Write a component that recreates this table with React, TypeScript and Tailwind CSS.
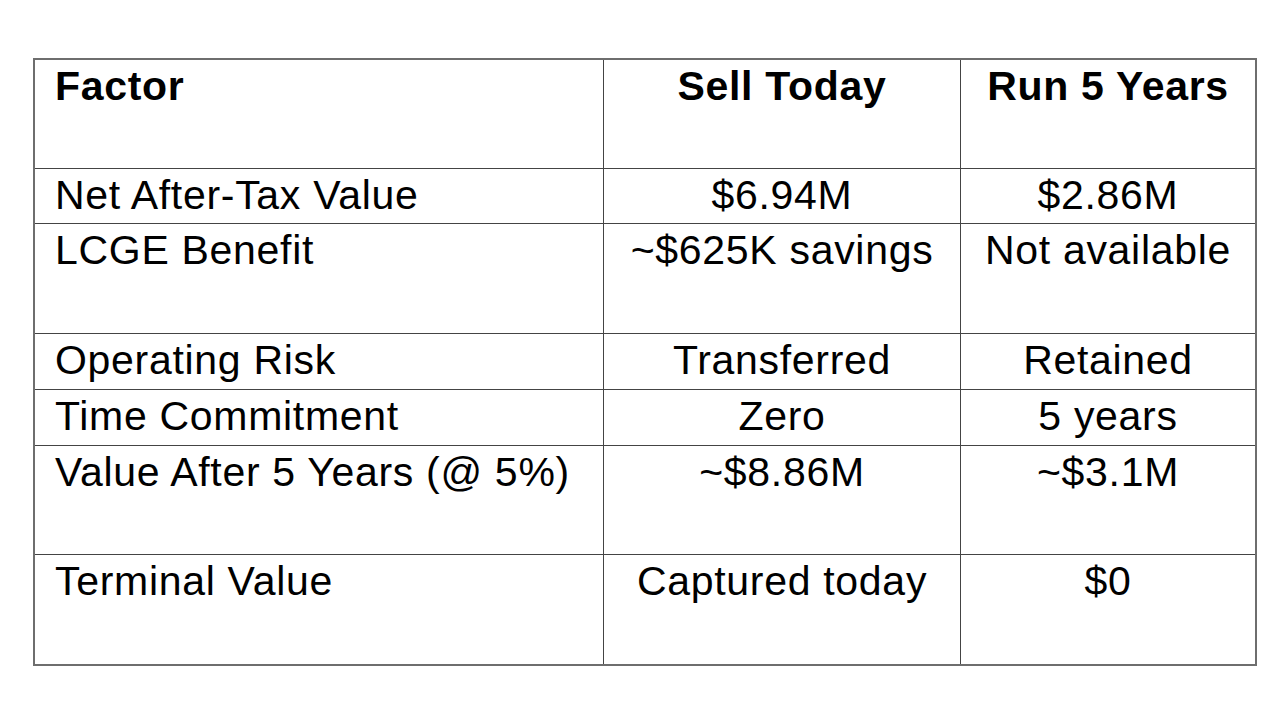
import React from "react";

const rows: { h: string; cells: [string, string, string]; bold?: boolean }[] = [
  { h: "h-[109px]", cells: ["Factor", "Sell Today", "Run 5 Years"], bold: true },
  { h: "h-[55px]", cells: ["Net After-Tax Value", "$6.94M", "$2.86M"] },
  { h: "h-[110px]", cells: ["LCGE Benefit", "~$625K savings", "Not available"] },
  { h: "h-[56px]", cells: ["Operating Risk", "Transferred", "Retained"] },
  { h: "h-[56px]", cells: ["Time Commitment", "Zero", "5 years"] },
  { h: "h-[109px]", cells: ["Value After 5 Years (@ 5%)", "~$8.86M", "~$3.1M"] },
  { h: "h-[109px]", cells: ["Terminal Value", "Captured today", "$0"] },
];

export default function App() {
  return (
    <div
      className="w-[1280px] h-[720px] bg-white pt-[58px] pl-[33px]"
      style={{ fontFamily: '"Liberation Sans", Arial, sans-serif' }}
    >
      <div className="w-[1224px] border-2 border-[#6e6e6e] text-black text-[41px] leading-[47px] tracking-[0.7px]">
        {rows.map((r, i) => (
          <div
            key={i}
            className={`grid grid-cols-[569px_357px_294px] ${r.h} ${
              i < rows.length - 1 ? "border-b border-[#444]" : ""
            } ${r.bold ? "font-bold" : ""}`}
          >
            <div className="border-r border-[#444] pl-[20px] pt-[3px] whitespace-nowrap">
              {r.cells[0]}
            </div>
            <div className="border-r border-[#444] text-center pt-[3px] whitespace-nowrap">
              {r.cells[1]}
            </div>
            <div className="text-center pt-[3px] whitespace-nowrap">{r.cells[2]}</div>
          </div>
        ))}
      </div>
    </div>
  );
}
